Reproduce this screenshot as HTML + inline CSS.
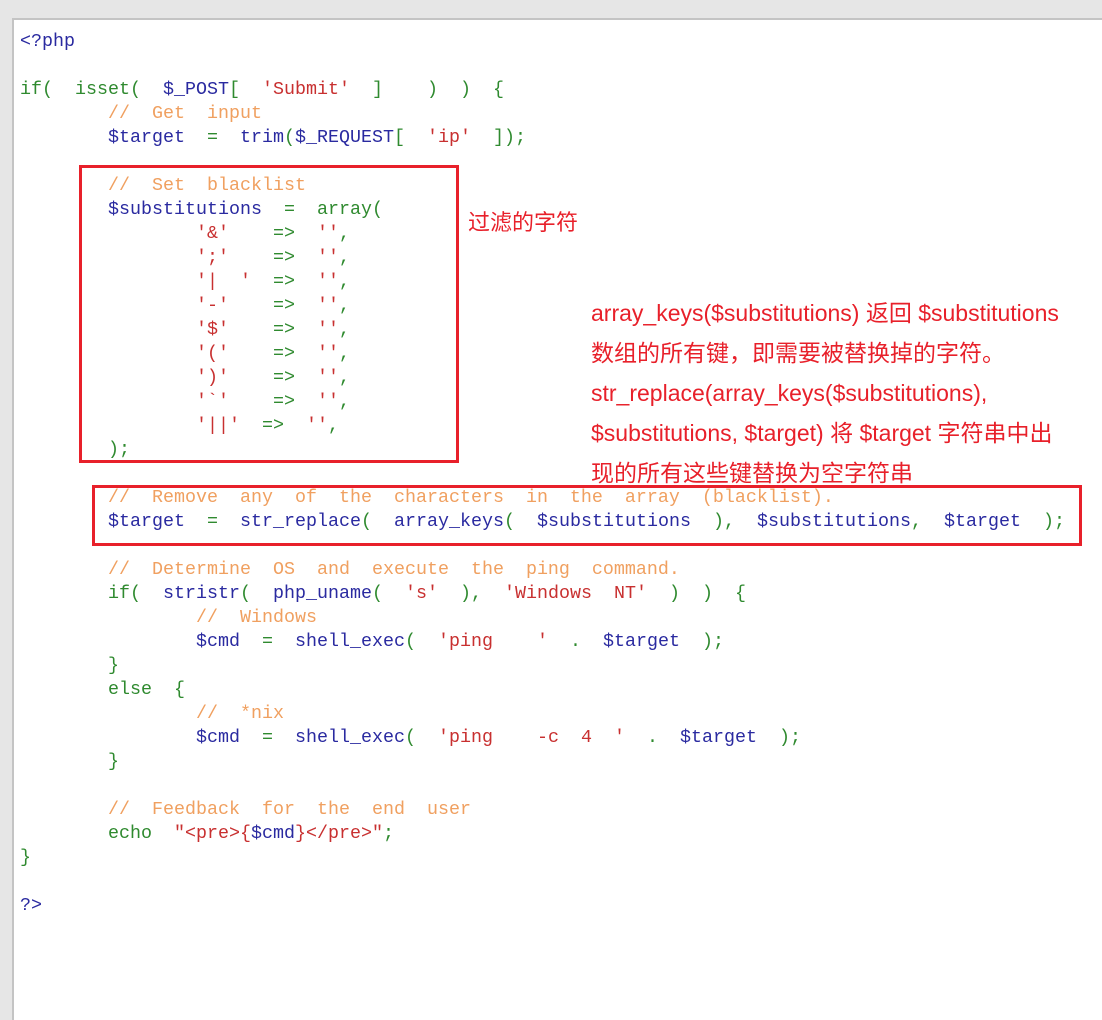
<!DOCTYPE html>
<html><head><meta charset="utf-8"><style>
body{margin:0;width:1102px;height:910px;background:#e6e6e6;position:relative;overflow:hidden}
.box{position:absolute;left:12px;top:18px;width:1200px;height:1000px;background:#fff;border-left:2px solid #c4c4c4;border-top:2px solid #c4c4c4}
.l{position:absolute;left:20px;height:24px;line-height:24px;white-space:pre;font-family:"Liberation Mono",monospace;font-size:18.33px;color:#2a2aa0}
.k{color:#2f8a2f}.c{color:#f0a060}.s{color:#c83030}.v{color:#2a2aa0}
.r{position:absolute;border:3px solid #e8202a}
.t{position:absolute;left:591px;font-family:"Liberation Sans","Noto Sans CJK SC",sans-serif;font-size:23px;color:#e8202a;white-space:pre;line-height:26px}
</style></head><body>
<div class="box"></div>
<div class="l" style="top:30px">&lt;?php</div>
<div class="l" style="top:78px"><span class="k">if(  isset(  </span>$_POST<span class="k">[  </span><span class="s">'Submit'</span><span class="k">  ]    )  )  {</span></div>
<div class="l c" style="top:102px">        //  Get  input</div>
<div class="l" style="top:126px">        $target  <span class="k">=  </span>trim<span class="k">(</span>$_REQUEST<span class="k">[  </span><span class="s">'ip'</span><span class="k">  ]);</span></div>
<div class="l c" style="top:174px">        //  Set  blacklist</div>
<div class="l" style="top:198px">        $substitutions  <span class="k">=  array(</span></div>
<div class="l" style="top:222px">                <span class="s">'&amp;'</span><span class="k">    =&gt;  </span><span class="s">''</span><span class="k">,</span></div>
<div class="l" style="top:246px">                <span class="s">';'</span><span class="k">    =&gt;  </span><span class="s">''</span><span class="k">,</span></div>
<div class="l" style="top:270px">                <span class="s">'|  '</span><span class="k">  =&gt;  </span><span class="s">''</span><span class="k">,</span></div>
<div class="l" style="top:294px">                <span class="s">'-'</span><span class="k">    =&gt;  </span><span class="s">''</span><span class="k">,</span></div>
<div class="l" style="top:318px">                <span class="s">'$'</span><span class="k">    =&gt;  </span><span class="s">''</span><span class="k">,</span></div>
<div class="l" style="top:342px">                <span class="s">'('</span><span class="k">    =&gt;  </span><span class="s">''</span><span class="k">,</span></div>
<div class="l" style="top:366px">                <span class="s">')'</span><span class="k">    =&gt;  </span><span class="s">''</span><span class="k">,</span></div>
<div class="l" style="top:390px">                <span class="s">'`'</span><span class="k">    =&gt;  </span><span class="s">''</span><span class="k">,</span></div>
<div class="l" style="top:414px">                <span class="s">'||'</span><span class="k">  =&gt;  </span><span class="s">''</span><span class="k">,</span></div>
<div class="l k" style="top:438px">        );</div>
<div class="l c" style="top:486px">        //  Remove  any  of  the  characters  in  the  array  (blacklist).</div>
<div class="l" style="top:510px">        $target  <span class="k">=  </span>str_replace<span class="k">(  </span>array_keys<span class="k">(  </span>$substitutions  <span class="k">),  </span>$substitutions<span class="k">,  </span>$target  <span class="k">);</span></div>
<div class="l c" style="top:558px">        //  Determine  OS  and  execute  the  ping  command.</div>
<div class="l" style="top:582px"><span class="k">        if(  </span>stristr<span class="k">(  </span>php_uname<span class="k">(  </span><span class="s">'s'</span><span class="k">  ),  </span><span class="s">'Windows  NT'</span><span class="k">  )  )  {</span></div>
<div class="l c" style="top:606px">                //  Windows</div>
<div class="l" style="top:630px">                $cmd  <span class="k">=  </span>shell_exec<span class="k">(  </span><span class="s">'ping    '</span><span class="k">  .  </span>$target  <span class="k">);</span></div>
<div class="l k" style="top:654px">        }</div>
<div class="l k" style="top:678px">        else  {</div>
<div class="l c" style="top:702px">                //  *nix</div>
<div class="l" style="top:726px">                $cmd  <span class="k">=  </span>shell_exec<span class="k">(  </span><span class="s">'ping    -c  4  '</span><span class="k">  .  </span>$target  <span class="k">);</span></div>
<div class="l k" style="top:750px">        }</div>
<div class="l c" style="top:798px">        //  Feedback  for  the  end  user</div>
<div class="l" style="top:822px"><span class="k">        echo  </span><span class="s">"&lt;pre&gt;{</span>$cmd<span class="s">}&lt;/pre&gt;"</span><span class="k">;</span></div>
<div class="l k" style="top:846px">}</div>
<div class="l" style="top:894px">?&gt;</div>
<div class="r" style="left:79px;top:165px;width:374px;height:292px"></div>
<div class="r" style="left:92px;top:485px;width:984px;height:55px"></div>
<div class="t" style="left:468px;top:210px;font-size:22px">过滤的字符</div>
<div class="t" style="top:300px">array_keys($substitutions) 返回 $substitutions</div>
<div class="t" style="top:340px">数组的所有键，即需要被替换掉的字符。</div>
<div class="t" style="top:380px">str_replace(array_keys($substitutions),</div>
<div class="t" style="top:420px">$substitutions, $target) 将 $target 字符串中出</div>
<div class="t" style="top:460px">现的所有这些键替换为空字符串</div>
</body></html>
